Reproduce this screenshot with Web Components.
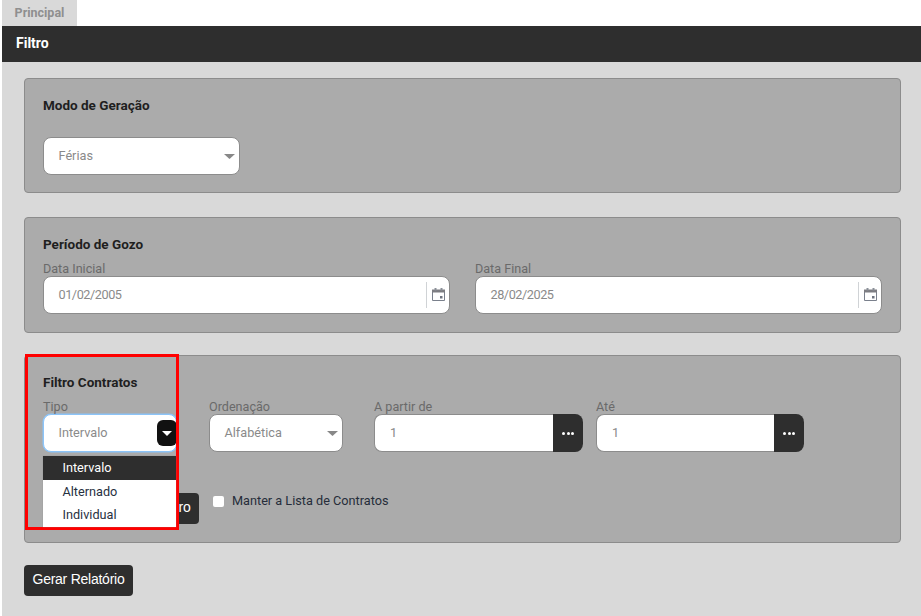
<!DOCTYPE html>
<html lang="pt">
<head>
<meta charset="utf-8">
<title>Filtro</title>
<style>
  html, body { margin: 0; height: 100%; }
  body { background: #fff; font-family: Roboto, "Liberation Sans", sans-serif; }
</style>
</head>
<body>
<report-page>
  <filter-panel title="Modo de Geração" gap="24" style="padding-bottom:17px">
    <select-field value="Férias" width="197"></select-field>
  </filter-panel>
  <filter-panel title="Período de Gozo" gap="9">
    <div style="display:grid;grid-template-columns:1fr 1fr;gap:25px">
      <date-field label="Data Inicial" value="01/02/2005"></date-field>
      <date-field label="Data Final" value="28/02/2025"></date-field>
    </div>
  </filter-panel>
  <filter-panel title="Filtro Contratos" gap="9">
    <div style="display:flex;align-items:flex-start">
      <select-field label="Tipo" value="Intervalo" width="134" open options="Intervalo,Alternado,Individual"></select-field>
      <select-field label="Ordenação" value="Alfabética" width="134" style="margin-left:32px"></select-field>
      <lookup-field label="A partir de" value="1" width="209" style="margin-left:31px"></lookup-field>
      <lookup-field label="Até" value="1" width="208" style="margin-left:13px"></lookup-field>
    </div>
    <div style="display:flex;align-items:flex-start;margin-top:41px">
      <dark-button width="156" align="right">ro</dark-button>
      <check-option style="margin-left:14px">Manter a Lista de Contratos</check-option>
    </div>
  </filter-panel>
  <dark-button slot="footer">Gerar Relatório</dark-button>
</report-page>

<script>
const ARROW = (color, w, h) => `<svg width="${w}" height="${h}" viewBox="0 0 12 6" preserveAspectRatio="none" style="display:block"><path d="M0 0h12L6 6z" fill="${color}"/></svg>`;

class ReportPage extends HTMLElement {
  constructor() {
    super();
    this.attachShadow({ mode: "open" });
    this.shadowRoot.innerHTML = `
      <style>
        :host { display: block; position: relative; height: 616px; overflow: hidden; box-sizing: border-box; padding-left: 2px; }
        .tab { width: 75px; height: 26px; box-sizing: border-box; padding-top: 5px; background: #d9d9d9; color: #8f8f8f; font: 700 12.5px/15px Roboto, sans-serif; text-align: center; }
        .bar { height: 36px; box-sizing: border-box; padding: 9px 14px; background: #2e2e2e; color: #fff; font: 700 14px/16px Roboto, sans-serif; }
        .content { height: 554px; box-sizing: border-box; padding: 16px 20px 0 22px; background: #d9d9d9; display: flex; flex-direction: column; gap: 24px; }
        .content ::slotted(filter-panel:nth-of-type(3)) { margin-top: -2px; }
        .footer { margin-top: -2px; }
        .mark { position: absolute; left: 25px; top: 354px; width: 154px; height: 176px; box-sizing: border-box; border: 3px solid #f00; pointer-events: none; }
      </style>
      <div class="tab">Principal</div>
      <div class="bar">Filtro</div>
      <div class="content">
        <slot></slot>
        <div class="footer"><slot name="footer"></slot></div>
      </div>
      <div class="mark"></div>`;
  }
}

class FilterPanel extends HTMLElement {
  constructor() {
    super();
    this.attachShadow({ mode: "open" });
  }
  connectedCallback() {
    const gap = this.getAttribute("gap") || 9;
    this.shadowRoot.innerHTML = `
      <style>
        :host { display: block; box-sizing: border-box; padding: 19px 18px 18px; background: #ababab; border: 1px solid #8c8c8c; border-radius: 4px; }
        h2 { margin: 0 0 ${gap}px; font: 700 13.5px/15px Roboto, sans-serif; color: #1f1f1f; }
      </style>
      <h2>${this.getAttribute("title")}</h2>
      <slot></slot>`;
    this.removeAttribute("title");
  }
}

const FIELD_STYLE = `
  label { display: block; height: 15px; font: 400 12.6px/15px Roboto, sans-serif; color: #6a6a6a; }
  .box { display: flex; align-items: center; height: 38px; box-sizing: border-box; background: #fff; border: 1px solid #8c8c8c; border-radius: 8px; color: #8a8a8a; font: 400 12.7px/16px Roboto, sans-serif; }
  .value { flex: 1; padding-left: 14.5px; }
`;

class SelectField extends HTMLElement {
  constructor() {
    super();
    this.attachShadow({ mode: "open" });
  }
  connectedCallback() {
    const label = this.getAttribute("label");
    const open = this.hasAttribute("open");
    const options = (this.getAttribute("options") || "").split(",").filter(Boolean);
    this.shadowRoot.innerHTML = `
      <style>
        :host { display: block; position: relative; width: ${this.getAttribute("width")}px; flex: none; }
        ${FIELD_STYLE}
        .arrow { display: flex; margin-right: 4px; }
        .box-btn { display: flex; align-items: center; justify-content: center; width: 20px; height: 26px; margin-right: -1px; background: #111; border-radius: 6px; }
        .box.open { border-color: #8cc4f8; box-shadow: 0 0 0 0.5px #8cc4f8; }
        ul { position: absolute; z-index: 2; left: 0; top: calc(100% + 4px); width: 133px; margin: 0; padding: 0 0 1px; list-style: none; background: #fff; font: 400 12.7px/16px Roboto, sans-serif; color: #27303f; box-shadow: 0 0 1px #888; }
        li { height: 23px; line-height: 23px; padding-left: 19.5px; }
        li.on { height: 24px; line-height: 24px; background: #2e2e2e; color: #fff; }
      </style>
      ${label ? `<label>${label}</label>` : ""}
      <div class="box ${open ? "open" : ""}">
        <span class="value">${this.getAttribute("value")}</span>
        ${open ? `<span class="box-btn">${ARROW("#fff", 10, 5)}</span>` : `<span class="arrow">${ARROW("#888", 11, 5)}</span>`}
      </div>
      ${open ? `<ul>${options.map((o, i) => `<li class="${i === 0 ? "on" : ""}">${o}</li>`).join("")}</ul>` : ""}`;
  }
}

class DateField extends HTMLElement {
  constructor() {
    super();
    this.attachShadow({ mode: "open" });
  }
  connectedCallback() {
    this.shadowRoot.innerHTML = `
      <style>
        :host { display: block; }
        ${FIELD_STYLE}
        .value { letter-spacing: -.45px; }
        .sep { width: 1px; height: 26px; background: #d0d3d6; }
        svg { margin: -1px 4px 0 5px; display: block; }
      </style>
      <label>${this.getAttribute("label")}</label>
      <div class="box">
        <span class="value">${this.getAttribute("value")}</span>
        <span class="sep"></span>
        <svg width="13" height="13" viewBox="0 0 13 13" fill="none">
          <path d="M.5 2.5v10h12v-10" stroke="#7a808c"/>
          <path d="M0 1.5h13v3H0z" fill="#7d7d82"/>
          <path d="M2.5 0h2v2.5h-2zM8.5 0h2v2.5h-2z" fill="#8a8f98"/>
          <rect x="8" y="8" width="2.5" height="2.5" fill="#6f7480"/>
        </svg>
      </div>`;
  }
}

class LookupField extends HTMLElement {
  constructor() {
    super();
    this.attachShadow({ mode: "open" });
  }
  connectedCallback() {
    this.shadowRoot.innerHTML = `
      <style>
        :host { display: block; width: ${this.getAttribute("width")}px; flex: none; }
        ${FIELD_STYLE}
        .box { border-right: 0; }
        .value { padding-left: 15px; }
        .btn { display: flex; align-items: center; justify-content: center; gap: 1.5px; align-self: stretch; width: 30px; margin: -1px 0; background: #2e2e2e; border-radius: 0 8px 8px 0; }
        .btn i { width: 3px; height: 3px; border-radius: 50%; background: #fff; }
      </style>
      <label>${this.getAttribute("label")}</label>
      <div class="box">
        <span class="value">${this.getAttribute("value")}</span>
        <span class="btn"><i></i><i></i><i></i></span>
      </div>`;
  }
}

class DarkButton extends HTMLElement {
  constructor() {
    super();
    this.attachShadow({ mode: "open" });
  }
  connectedCallback() {
    const width = this.getAttribute("width");
    const right = this.getAttribute("align") === "right";
    this.shadowRoot.innerHTML = `
      <style>
        :host { display: inline-block; vertical-align: top; flex: none; }
        .btn { ${width ? `width: ${width}px;` : ""} height: 31px; box-sizing: border-box; padding: 0 8.5px; background: #2e2e2e; border-radius: 4px; color: #fff; font: 400 14px/29px "Liberation Sans", sans-serif; letter-spacing: -.25px; text-align: ${right ? "right" : "left"}; }
      </style>
      <div class="btn"><slot></slot></div>`;
  }
}

class CheckOption extends HTMLElement {
  constructor() {
    super();
    this.attachShadow({ mode: "open" });
    this.shadowRoot.innerHTML = `
      <style>
        :host { display: flex; align-items: center; gap: 8px; color: #262d3a; font: 400 12.7px/16px Roboto, "Liberation Sans", sans-serif; }
        .c { width: 11px; height: 11px; background: #fff; border-radius: 2px; margin-top: 1px; }
      </style>
      <span class="c"></span><span><slot></slot></span>`;
  }
}

customElements.define("report-page", ReportPage);
customElements.define("filter-panel", FilterPanel);
customElements.define("select-field", SelectField);
customElements.define("date-field", DateField);
customElements.define("lookup-field", LookupField);
customElements.define("dark-button", DarkButton);
customElements.define("check-option", CheckOption);
</script>
</body>
</html>
